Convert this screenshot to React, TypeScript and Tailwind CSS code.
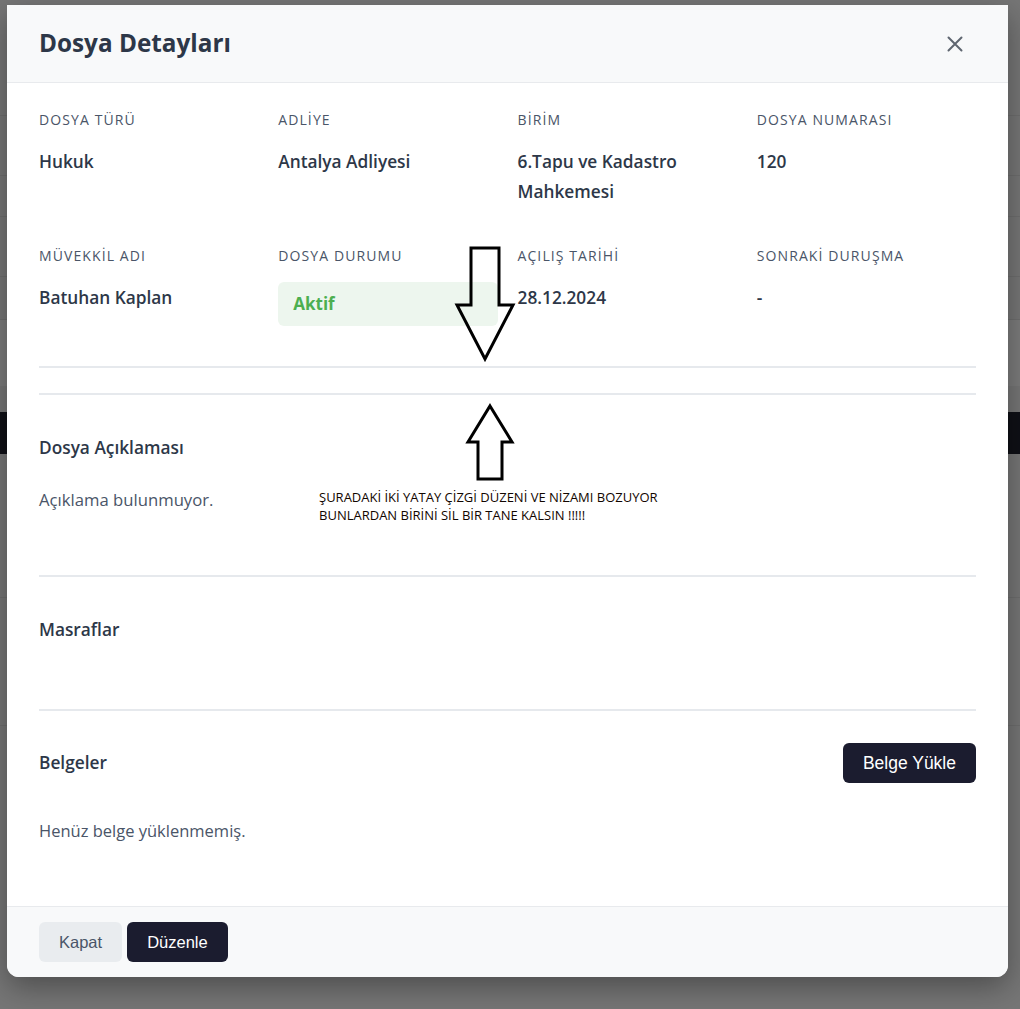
import React from 'react'

const FONT = { fontFamily: '"Open Sans", "Noto Sans", sans-serif' }
const BTN_FONT = { fontFamily: '"Liberation Sans", Arial, sans-serif' }

type Field = { label: string; value: string; badge?: boolean }

const fields: Field[] = [
  { label: 'DOSYA TÜRÜ', value: 'Hukuk' },
  { label: 'ADLİYE', value: 'Antalya Adliyesi' },
  { label: 'BİRİM', value: '6.Tapu ve Kadastro Mahkemesi' },
  { label: 'DOSYA NUMARASI', value: '120' },
  { label: 'MÜVEKKİL ADI', value: 'Batuhan Kaplan' },
  { label: 'DOSYA DURUMU', value: 'Aktif', badge: true },
  { label: 'AÇILIŞ TARİHİ', value: '28.12.2024' },
  { label: 'SONRAKİ DURUŞMA', value: '-' },
]

function Divider({ className = '' }: { className?: string }) {
  return <div className={`h-[2px] bg-[#e6e9ed] ${className}`} />
}

// underlying page that shows through the dimmed backdrop
function BackgroundPage() {
  return (
    <div className="flex flex-col">
      <div className="h-[116px] border-b border-[#6e6e6e]" />
      <div className="h-[60px] border-b border-[#6e6e6e]" />
      <div className="h-[41px] border-b border-[#6e6e6e]" />
      <div className="h-[60px] border-b border-[#6e6e6e]" />
      <div className="h-[43px] border-b border-[#6e6e6e]" />
      <div className="h-[66px] bg-[#7c7c7c]" />
      <div className="h-[26px]" />
      <div className="h-[42px] bg-[#0f1016]" />
      <div className="h-[144px] border-b border-[#6e6e6e]" />
      <div className="h-[128px] border-b border-[#6e6e6e]" />
    </div>
  )
}

function Annotation() {
  return (
    <>
      <svg className="pointer-events-none absolute left-0 top-0" width={1020} height={1009}>
        <polygon
          points="471,248 499,248 499,305 513,305 485,359 457,305 471,305"
          fill="none"
          stroke="#000"
          strokeWidth={3}
        />
        <polygon
          points="490,406 512,442 502,442 502,479 478,479 478,442 468,442"
          fill="none"
          stroke="#000"
          strokeWidth={3}
        />
      </svg>
      <div
        className="pointer-events-none absolute left-[319px] top-[488px] text-[13px] leading-[18px] text-[#120600]"
        style={FONT}
      >
        <div>ŞURADAKİ İKİ YATAY ÇİZGİ DÜZENİ VE NİZAMI BOZUYOR</div>
        <div>BUNLARDAN BİRİNİ SİL BİR TANE KALSIN !!!!!</div>
      </div>
    </>
  )
}

export default function App() {
  return (
    <div className="relative h-[1009px] w-full overflow-hidden bg-[#767676]" style={FONT}>
      <BackgroundPage />

      <div className="absolute left-[7px] top-[5px] w-[1001px] overflow-hidden rounded-b-xl bg-white shadow-[0_10px_30px_rgba(0,0,0,0.35)]">
        <div className="flex h-[78px] items-center justify-between border-b border-[#e8eaed] bg-[#f8f9fa] px-8">
          <h1 className="text-[24.3px] font-bold text-[#2d3748]">Dosya Detayları</h1>
          <button className="mr-[13px] text-[#5f6670]" aria-label="Kapat">
            <svg width="16" height="16" viewBox="0 0 16 16" fill="none" stroke="currentColor" strokeWidth="2" strokeLinecap="round">
              <path d="M1.5 1.5l13 13M14.5 1.5l-13 13" />
            </svg>
          </button>
        </div>

        <div className="px-8 pb-[60px] pt-[27px]">
          <div className="grid grid-cols-4 gap-x-5 gap-y-[39px]">
            {fields.map((f) => (
              <div key={f.label}>
                <div className="text-[14px] leading-[20px] tracking-[1.1px] text-[#4a5568]">{f.label}</div>
                {f.badge ? (
                  <div className="mt-[16px] flex h-[44px] items-center rounded-md bg-[#edf6ee] px-[15px] text-[17px] font-bold text-[#4caf50]">
                    {f.value}
                  </div>
                ) : (
                  <div className="mt-[17px] text-[17.3px] font-semibold leading-[30px] text-[#2d3748]">{f.value}</div>
                )}
              </div>
            ))}
          </div>

          <Divider className="mt-10" />
          <Divider className="mt-[25px]" />

          <section className="pt-10">
            <h2 className="text-[17.3px] font-semibold leading-[26px] text-[#2d3748]">Dosya Açıklaması</h2>
            <p className="mt-6 text-[16.7px] leading-[30px] text-[#4a5568]">Açıklama bulunmuyor.</p>
          </section>

          <Divider className="mt-[60px]" />

          <section className="pt-10">
            <h2 className="text-[17.3px] font-semibold leading-[26px] text-[#2d3748]">Masraflar</h2>
          </section>

          <Divider className="mt-[66px]" />

          <section className="pt-8">
            <div className="flex h-10 items-center justify-between">
              <h2 className="text-[17.3px] font-semibold leading-[26px] text-[#2d3748]">Belgeler</h2>
              <button
                className="h-10 rounded-md bg-[#1b1c2f] px-5 text-[17.5px] text-white"
                style={BTN_FONT}
              >
                Belge Yükle
              </button>
            </div>
            <p className="mt-[33px] text-[16.5px] leading-[30px] text-[#4a5568]">Henüz belge yüklenmemiş.</p>
          </section>
        </div>

        <div className="flex gap-[5px] border-t border-[#e8eaed] bg-[#f8f9fa] px-8 py-[15px]">
          <button className="h-10 rounded-md bg-[#e9ecef] px-5 text-[16.5px] text-[#4a5568]" style={BTN_FONT}>
            Kapat
          </button>
          <button className="h-10 rounded-md bg-[#1b1c2f] px-5 text-[16.5px] text-white" style={BTN_FONT}>
            Düzenle
          </button>
        </div>
      </div>

      <Annotation />
    </div>
  )
}
